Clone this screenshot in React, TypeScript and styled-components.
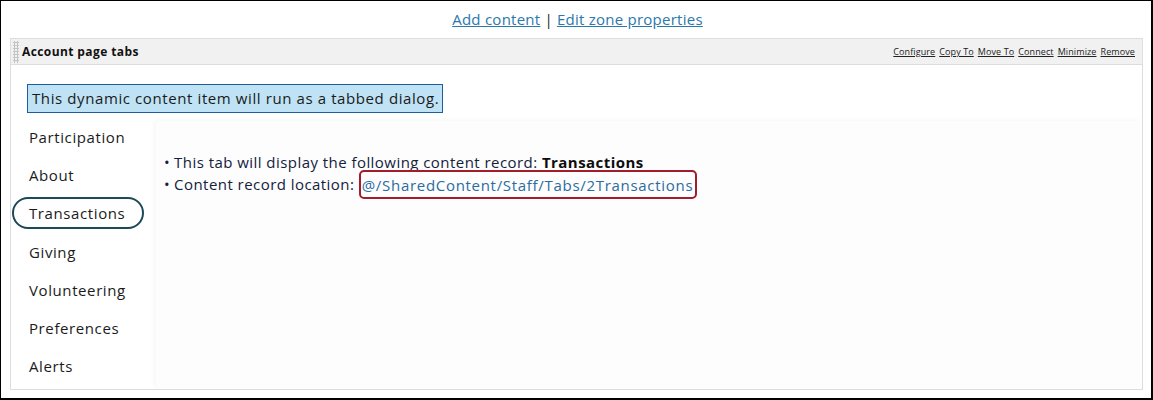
import React from 'react'
import styled, {createGlobalStyle} from 'styled-components'

const GlobalStyle = createGlobalStyle`
  html, body {
    margin: 0;
    padding: 0;
    background: #fff;
  }
  body {
    font-family: 'Open Sans', 'Liberation Sans', sans-serif;
    color: #14213d;
  }
`

const Frame = styled.div`
  box-sizing: border-box;
  width: 1153px;
  height: 400px;
  border: 1px solid #000;
  border-right-width: 2px;
  border-bottom-width: 2px;
  padding: 6px 8px 8px 9px;
  display: flex;
  flex-direction: column;
`

const ZoneLinks = styled.div`
  height: 31px;
  display: flex;
  justify-content: center;
  align-items: flex-start;
  gap: 4px;
  font-size: 15px;
  letter-spacing: 0.25px;
  color: #222;
  padding-top: 2px;
  padding-left: 2px;
  box-sizing: border-box;

  a {
    color: #2b78ab;
    text-decoration: underline;
  }
`

const Zone = styled.section`
  flex: 1;
  border: 1px solid #dddddd;
  display: flex;
  flex-direction: column;
`

const ZoneHeader = styled.div`
  height: 25px;
  background: #f1f1f1;
  border-bottom: 1px solid #dddddd;
  display: flex;
  align-items: center;
  padding: 0 7px 0 2px;
`

const Grip = styled.div`
  width: 6px;
  height: 22px;
  margin-right: 3px;
  background-image: radial-gradient(circle, #c4c4c4 1px, transparent 1.2px);
  background-size: 3px 3px;
`

const ZoneTitle = styled.h3`
  margin: 0;
  font-size: 12px;
  letter-spacing: 0.4px;
  font-weight: 700;
  color: #111;
  flex: 1;
`

const Actions = styled.div`
  display: flex;
  gap: 4px;

  a {
    font-size: 9px;
    letter-spacing: 0.1px;
    color: #222;
    text-decoration: underline;
  }
`

const ZoneBody = styled.div`
  flex: 1;
  display: flex;
  flex-direction: column;
  padding-top: 19px;
`

const Notice = styled.div`
  align-self: flex-start;
  margin-left: 16px;
  background: #bfe3f5;
  border: 1px solid #1d5d9b;
  font-size: 15px;
  letter-spacing: 0.6px;
  line-height: 27px;
  padding: 0 3px 0 4px;
  color: #1a1a1a;
`

const TabArea = styled.div`
  flex: 1;
  display: flex;
  margin-top: 6px;
  min-height: 0;
`

const TabList = styled.ul`
  list-style: none;
  margin: 0;
  padding: 0 0 0 1px;
  width: 144px;
  flex-shrink: 0;
  display: flex;
  flex-direction: column;
  gap: 6.2px;
`

const Tab = styled.li<{$active?: boolean}>`
  box-sizing: border-box;
  height: 32px;
  width: 132px;
  display: flex;
  align-items: center;
  padding-left: ${p => (p.$active ? '15px' : '17px')};
  font-size: 15px;
  letter-spacing: 0.6px;
  color: #1b1b1b;
  border: ${p => (p.$active ? '2px solid #1d4a57' : 'none')};
  border-radius: 16px;
  &:first-child {
    margin-top: 2px;
  }
`

const Panel = styled.div`
  flex: 1;
  margin: 2px 1px 1px 0;
  background: #fdfdfd;
  box-shadow: -2px -1px 4px rgba(0, 0, 0, 0.04);
  border-radius: 4px 0 0 0;
  padding: 30px 0 0 8px;
  font-size: 15px;
  letter-spacing: 0.45px;
  line-height: 22px;
`

const Line = styled.div`
  &::before {
    content: '•';
    margin-right: 4px;
  }
`

const RecordTitle = styled.b`
  color: #0d0d0d;
`

const RecordPath = styled.span`
  border: 2.5px solid #a11d2b;
  border-radius: 5px;
  padding: 2.5px 2px 3px 1px;
  letter-spacing: 0.7px;
  color: #2a6c9f;
`

export default function App() {
    const tabs = ['Participation', 'About', 'Transactions', 'Giving', 'Volunteering', 'Preferences', 'Alerts']
    const actions = ['Configure', 'Copy To', 'Move To', 'Connect', 'Minimize', 'Remove']

    return (
        <>
            <GlobalStyle/>
            <Frame>
                <ZoneLinks>
                    <a href='#'>Add content</a>
                    <span>|</span>
                    <a href='#'>Edit zone properties</a>
                </ZoneLinks>

                <Zone>
                    <ZoneHeader>
                        <Grip/>
                        <ZoneTitle>Account page tabs</ZoneTitle>
                        <Actions>
                            {actions.map(a => <a key={a} href='#'>{a}</a>)}
                        </Actions>
                    </ZoneHeader>

                    <ZoneBody>
                        <Notice>This dynamic content item will run as a tabbed dialog.</Notice>
                        <TabArea>
                            <TabList>
                                {tabs.map(t => <Tab key={t} $active={t === 'Transactions'}>{t}</Tab>)}
                            </TabList>
                            <Panel>
                                <Line>This tab will display the following content record: <RecordTitle>Transactions</RecordTitle></Line>
                                <Line>Content record location: <RecordPath>@/SharedContent/Staff/Tabs/2Transactions</RecordPath></Line>
                            </Panel>
                        </TabArea>
                    </ZoneBody>
                </Zone>
            </Frame>
        </>
    )
}
